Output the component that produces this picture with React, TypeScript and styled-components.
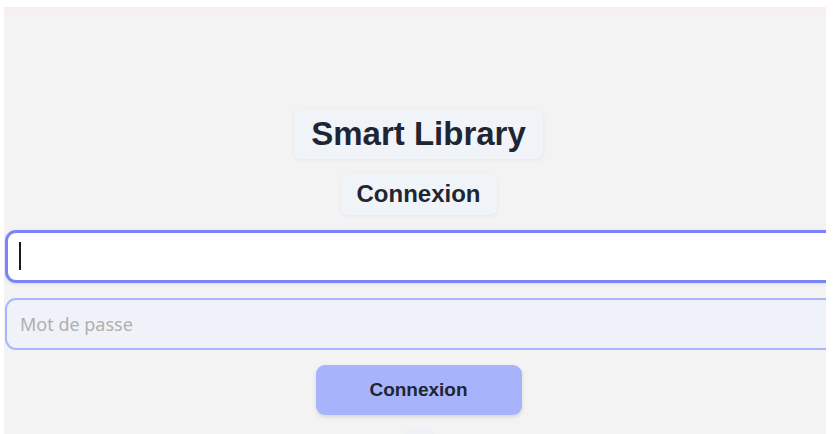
import React from "react";
import styled, { createGlobalStyle } from "styled-components";

const Global = createGlobalStyle`
  html, body { margin: 0; padding: 0; background: #ffffff; }
  body { font-family: "Liberation Sans", Arial, sans-serif; }
  * { box-sizing: border-box; }
`;

const Page = styled.div`
  width: 834px;
  height: 434px;
  padding: 7px 8px 0 4px;
  background: #ffffff;
  overflow: hidden;
`;

const Panel = styled.div`
  height: 427px;
  background: #f3f3f3;
  overflow: hidden;
  display: flex;
  flex-direction: column;
`;

const TopBand = styled.div`
  height: 6px;
  background: #f8eff1;
  flex-shrink: 0;
`;

const Content = styled.div`
  display: flex;
  flex-direction: column;
  align-items: center;
  padding-top: 96px;
  padding-left: 7px;
`;

const Badge = styled.div<{ $size: number; $px: number; $py: number }>`
  background: #f0f3f8;
  border-radius: 7px;
  box-shadow: 0 1px 4px rgba(0, 0, 0, 0.06);
  padding: ${(p) => p.$py}px ${(p) => p.$px}px;
  font-family: "Liberation Sans", Arial, sans-serif;
  font-weight: 700;
  font-size: ${(p) => p.$size}px;
  line-height: 1.15;
  color: #1f2633;
  margin: 0;
`;

const Title = styled(Badge).attrs({ as: "h1" })``;
const Subtitle = styled(Badge).attrs({ as: "h2" })`
  margin-top: 14px;
`;

const Field = styled.div<{ $top: number }>`
  position: relative;
  align-self: flex-start;
  margin-left: -6px;
  margin-top: ${(p) => p.$top}px;
  width: 840px;
`;

const Input = styled.input<{ $focused?: boolean }>`
  display: block;
  width: 100%;
  height: ${(p) => (p.$focused ? 53 : 52)}px;
  border-radius: 11px;
  border: ${(p) => (p.$focused ? "3px solid #7b84f6" : "2px solid #abb5fb")};
  background: ${(p) => (p.$focused ? "#ffffff" : "#eff2f8")};
  padding: 0 13px;
  font-family: "Noto Sans", "Open Sans", sans-serif;
  font-size: 18px;
  color: #1f2633;
  outline: none;
  box-shadow: ${(p) => (p.$focused ? "0 1px 3px rgba(123,132,246,0.25)" : "none")};
  &::placeholder {
    color: #afafaf;
  }
`;

const Caret = styled.span`
  position: absolute;
  left: 14px;
  top: 12px;
  width: 1.5px;
  height: 28px;
  background: #1a1a1a;
`;

const Button = styled.button`
  margin-top: 15px;
  width: 206px;
  height: 50px;
  border: none;
  border-radius: 9px;
  background: #a7b4fc;
  box-shadow: 0 2px 4px rgba(0, 0, 0, 0.12);
  font-family: "Liberation Sans", Arial, sans-serif;
  font-weight: 700;
  font-size: 19px;
  color: #1f2633;
`;

const Stub = styled.div`
  margin-top: 11px;
  width: 30px;
  height: 20px;
  border-radius: 8px;
  background: #eef2f7;
`;

export default function App() {
  return (
    <>
      <Global />
      <Page>
        <Panel>
          <TopBand />
          <Content>
            <Title $size={33} $px={17} $py={6}>
              Smart Library
            </Title>
            <Subtitle $size={24} $px={16} $py={7}>
              Connexion
            </Subtitle>
            <Field $top={15}>
              <Input $focused type="text" aria-label="Identifiant" />
              <Caret />
            </Field>
            <Field $top={15}>
              <Input type="password" placeholder="Mot de passe" />
            </Field>
            <Button>Connexion</Button>
            <Stub />
          </Content>
        </Panel>
      </Page>
    </>
  );
}
